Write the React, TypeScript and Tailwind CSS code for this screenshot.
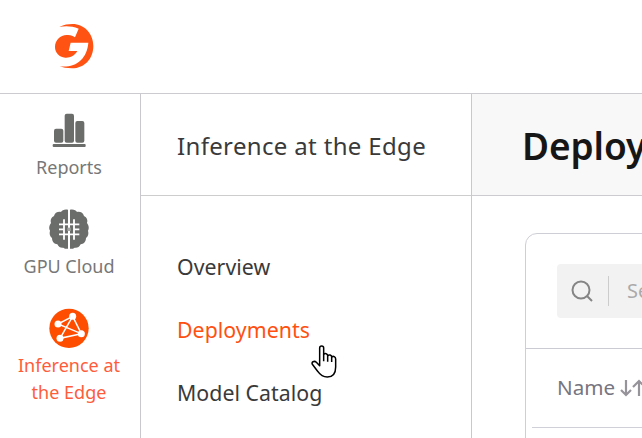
import React from "react";

function Logo() {
  return (
    <svg className="block" width="70" height="65" viewBox="0 0 210 195">
      <path
        fill="#ff5314"
        d="M58 36C73 29 84 27 97 27C134 27 160 57 160 93C160 131 134 160 96 160C80 160 69 158 58 154C107 160 141 132 145 83H92L86 108H112C105 121 90 129 76 128C56 126 45 112 45 96C45 76 61 60 80 60C91 59 99 62 105 67L116 41C96 33 76 32 58 36Z"
      />
    </svg>
  );
}

function ReportsIcon() {
  return (
    <svg className="block" width="60" height="60" viewBox="0 0 180 180" fill="#6b6d6b">
      <rect x="42" y="86" width="28" height="42" rx="6" />
      <rect x="74" y="41" width="28" height="87" rx="6" />
      <rect x="106" y="63" width="27" height="65" rx="6" />
      <rect x="38" y="132" width="99" height="9" rx="3" />
    </svg>
  );
}

function GpuIcon() {
  return (
    <svg className="block" width="60" height="60" viewBox="0 0 180 180">
      <path
        fill="#6b6d6b"
        d="M84 29C74 27 66 30 63 36C53 34 44 39 42 48C33 52 30 61 33 69C27 76 26 86 30 92C27 101 30 110 36 114C36 125 43 132 52 133C56 142 64 145 70 143C75 147 80 147 84 146ZM90 29C100 27 108 30 111 36C121 34 130 39 132 48C141 52 144 61 141 69C147 76 148 86 144 92C147 101 144 110 138 114C138 125 131 132 122 133C118 142 110 145 104 143C99 147 94 147 90 146Z"
      />
      <g fill="none" stroke="#fff" strokeWidth="5.5">
        <path d="M72 58V119M87 28V73M102 58V119M87 103V147M57 73H118M57 88H72M57 103H118M102 88H118" />
      </g>
      <rect x="82" y="83" width="10" height="10" fill="#a5a6a5" />
    </svg>
  );
}

function InferenceIcon() {
  return (
    <svg className="block" width="60" height="60" viewBox="0 0 180 180">
      <circle cx="87" cy="85" r="59" fill="#ff4d00" />
      <path d="M98 49L54 72L124 101L60 115L98 49L124 101" fill="none" stroke="#fff" strokeWidth="4.5" />
      <g fill="#fff">
        <circle cx="98" cy="49" r="10.5" />
        <circle cx="54" cy="72" r="10.5" />
        <circle cx="124" cy="101" r="10.5" />
        <circle cx="60" cy="115" r="10.5" />
      </g>
    </svg>
  );
}

function Cursor() {
  return (
    <svg className="absolute left-[300px] top-[335px]" width="50" height="50" viewBox="0 0 150 150">
      <path
        d="M59 92V39C59 31 71 31 71 39V58C75 54 83 56 83 62C87 58 95 60 95 66C100 62 107 65 107 72V96C107 115 99 126 82 126C68 126 60 119 54 110L37 88C33 81 43 76 49 82Z"
        fill="#fff"
        stroke="#000"
        strokeWidth="4.5"
        strokeLinejoin="round"
      />
      <path d="M71 57V79M83 62V80M95 66V81" stroke="#000" strokeWidth="4.5" />
    </svg>
  );
}

export default function App() {
  return (
    <div className="relative flex h-[438px] w-[642px] flex-col overflow-hidden bg-white font-['Noto_Sans',sans-serif] whitespace-nowrap">
      <header className="h-[93px] shrink-0 pt-[15px] pl-[40px]">
        <Logo />
      </header>
      <div className="flex flex-1 border-t border-[#cbcbd0]">
        <nav className="w-[141px] shrink-0 border-r border-[#c8c8cd] text-center text-[18px] leading-[27px] text-[#777]">
          <div className="h-[99px] pt-[6px]">
            <div className="ml-[40px] h-[54px]"><ReportsIcon /></div>
            <div className="-ml-[2px]">Reports</div>
          </div>
          <div className="h-[99px] pt-[7px]">
            <div className="ml-[40px] h-[53px]"><GpuIcon /></div>
            <div className="-ml-[2px]">GPU Cloud</div>
          </div>
          <div className="pt-[8px] text-[#ff5c3c]">
            <div className="ml-[40px] h-[52px]"><InferenceIcon /></div>
            <div className="-ml-[2px]">Inference at<br />the Edge</div>
          </div>
        </nav>
        <aside className="w-[331px] shrink-0 border-r border-[#c8c8cd] text-[21.3px] text-[#3a3a3a]">
          <div className="flex h-[102px] items-center border-b border-[#cdcdcd] pt-[2px] pl-[36px] text-[24px] tracking-[0.34px]">Inference at the Edge</div>
          <div className="pt-[39px] pl-[36px] leading-[63px] tracking-[0.04px]">
            <div>Overview</div>
            <div className="text-[#ff5010]">Deployments</div>
            <div>Model Catalog</div>
          </div>
        </aside>
        <main className="w-[170px] overflow-hidden">
          <div className="flex h-[102px] items-center border-b border-[#cbcbd0] bg-[#f8f8f8] pt-[2px] pl-[50px] text-[37px] font-semibold tracking-[-0.1px] text-[#161616]">Deployments</div>
          <section className="mt-[37px] ml-[53px] h-[240px] w-[200px] rounded-tl-[12px] border-[1.5px] border-[#ceced6]">
            <div className="flex h-[115px] border-b border-[#cbcbd4] pt-[30px] pl-[31px]">
              <div className="flex h-[54px] w-[160px] shrink-0 items-center rounded-[4px] bg-[#f2f2f2] text-[20px] text-[#aaa]">
                <svg className="ml-[14px] shrink-0" width="22" height="22" viewBox="0 0 22 22" fill="none" stroke="#858585" strokeWidth="2">
                  <circle cx="10" cy="10" r="8.5" />
                  <path d="M16 16L21 21" />
                </svg>
                <span className="ml-[15px] h-[30px] w-px bg-[#ccc]" />
                <span className="ml-[18px]">Search</span>
              </div>
            </div>
            <div className="flex h-[78px] items-center pb-px pl-[31px] text-[20.6px] text-[#777580]">
              Name
              <svg className="ml-[5px] shrink-0" width="28" height="18" viewBox="0 0 28 18" fill="none" stroke="#96949a" strokeWidth="2.2">
                <path d="M6 1V16M1 11L6 16L11 11M19 17V2M13 8L19 2L25 8" />
              </svg>
            </div>
            <div className="ml-[6px] h-px bg-[#d0d0d8]" />
          </section>
        </main>
      </div>
      <Cursor />
    </div>
  );
}
